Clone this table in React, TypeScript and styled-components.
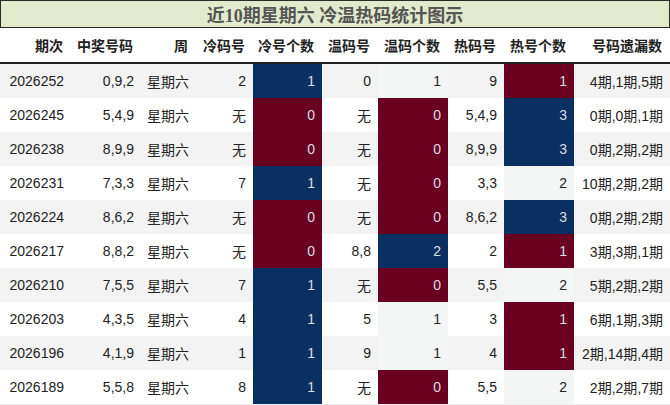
import React from "react";
import styled, { createGlobalStyle } from "styled-components";

const Global = createGlobalStyle`
  html, body { margin: 0; padding: 0; background: #fff; }
  body { font-family: "Liberation Sans", "Noto Sans CJK SC", sans-serif; }
`;

const COLS = "71px 70px 55px 57px 69px 56px 70px 56px 70px 96px";

const Wrap = styled.div`
  width: 670px;
`;

const Title = styled.div`
  height: 26px;
  border: 1px solid #2a2a2a;
  background: #e2eace;
  display: flex;
  align-items: center;
  justify-content: center;
  font-family: "Liberation Serif", "Noto Sans CJK SC", serif;
  font-weight: bold;
  font-size: 18px;
  color: #555;
`;

const HeadRow = styled.div`
  display: grid;
  grid-template-columns: ${COLS};
  height: 34px;
  border-bottom: 2px solid #222;
  background: #fff;
`;

const HeadCell = styled.div`
  display: flex;
  align-items: center;
  justify-content: flex-end;
  padding-right: 8px;
  font-weight: bold;
  font-size: 14px;
  color: #222;
  white-space: nowrap;
`;

const Row = styled.div<{ $odd: boolean }>`
  display: grid;
  grid-template-columns: ${COLS};
  height: 34px;
  background: ${(p) => (p.$odd ? "#f3f3f3" : "#fff")};
`;

type Tone = "none" | "plain" | "blue" | "red";

const Cell = styled.div<{ $tone?: Tone }>`
  display: flex;
  align-items: center;
  justify-content: flex-end;
  padding-right: 7px;
  font-size: 14px;
  white-space: nowrap;
  color: ${(p) => (p.$tone === "blue" || p.$tone === "red" ? "#d9dde3" : "#222")};
  background: ${(p) =>
    p.$tone === "blue"
      ? "#0a3061"
      : p.$tone === "red"
      ? "#6a0021"
      : p.$tone === "plain"
      ? "#f4f6f6"
      : "transparent"};
`;

const Bottom = styled.div`
  height: 1px;
  background: #eee;
`;

const headers = ["期次", "中奖号码", "周", "冷码号", "冷号个数", "温码号", "温码个数", "热码号", "热号个数", "号码遗漏数"];

type R = [string, string, string, string, string, string, string, string];
const rows: R[] = [
  ["2026252", "0,9,2", "2", "1", "0", "1", "9", "1"],
  ["2026245", "5,4,9", "无", "0", "无", "0", "5,4,9", "3"],
  ["2026238", "8,9,9", "无", "0", "无", "0", "8,9,9", "3"],
  ["2026231", "7,3,3", "7", "1", "无", "0", "3,3", "2"],
  ["2026224", "8,6,2", "无", "0", "无", "0", "8,6,2", "3"],
  ["2026217", "8,8,2", "无", "0", "8,8", "2", "2", "1"],
  ["2026210", "7,5,5", "7", "1", "无", "0", "5,5", "2"],
  ["2026203", "4,3,5", "4", "1", "5", "1", "3", "1"],
  ["2026196", "4,1,9", "1", "1", "9", "1", "4", "1"],
  ["2026189", "5,5,8", "8", "1", "无", "0", "5,5", "2"],
];

const miss = ["4期,1期,5期", "0期,0期,1期", "0期,2期,2期", "10期,2期,2期", "0期,2期,2期", "3期,3期,1期", "5期,2期,2期", "6期,1期,3期", "2期,14期,4期", "2期,2期,7期"];

const coldTone = (v: string): Tone => (v === "0" ? "red" : v === "1" ? "blue" : "plain");
const warmTone = (v: string): Tone => (v === "0" ? "red" : v === "2" ? "blue" : "plain");
const hotTone = (v: string): Tone => (v === "1" ? "red" : v === "3" ? "blue" : "plain");

export default function App() {
  return (
    <Wrap>
      <Global />
      <Title>近10期星期六 冷温热码统计图示</Title>
      <HeadRow>
        {headers.map((h) => (
          <HeadCell key={h}>{h}</HeadCell>
        ))}
      </HeadRow>
      {rows.map((r, i) => (
        <Row key={r[0]} $odd={i % 2 === 0}>
          <Cell>{r[0]}</Cell>
          <Cell>{r[1]}</Cell>
          <Cell>星期六</Cell>
          <Cell>{r[2]}</Cell>
          <Cell $tone={coldTone(r[3])}>{r[3]}</Cell>
          <Cell>{r[4]}</Cell>
          <Cell $tone={warmTone(r[5])}>{r[5]}</Cell>
          <Cell>{r[6]}</Cell>
          <Cell $tone={hotTone(r[7])}>{r[7]}</Cell>
          <Cell>{miss[i]}</Cell>
        </Row>
      ))}
      <Bottom />
    </Wrap>
  );
}
